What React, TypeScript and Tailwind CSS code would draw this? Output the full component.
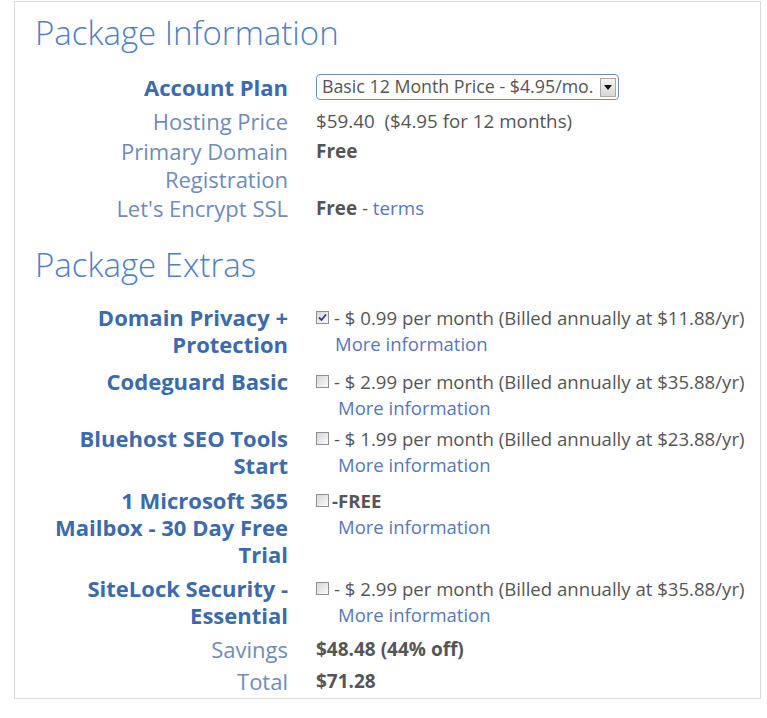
import React from 'react';

const FONT = { fontFamily: '"Open Sans", "Noto Sans", "Liberation Sans", sans-serif' };

type Extra = {
  label: string[];
  price?: string;
  free?: boolean;
  checked?: boolean;
  mt: string;
  moreIndent: string;
};

const EXTRAS: Extra[] = [
  {
    label: ['Domain Privacy +', 'Protection'],
    price: '- $ 0.99 per month (Billed annually at $11.88/yr)',
    checked: true,
    mt: 'mt-[19px]',
    moreIndent: 'pl-[19px]',
  },
  {
    label: ['Codeguard Basic'],
    price: '- $ 2.99 per month (Billed annually at $35.88/yr)',
    mt: 'mt-[10px]',
    moreIndent: 'pl-[22px]',
  },
  {
    label: ['Bluehost SEO Tools', 'Start'],
    price: '- $ 1.99 per month (Billed annually at $23.88/yr)',
    mt: 'mt-[4px]',
    moreIndent: 'pl-[22px]',
  },
  {
    label: ['1 Microsoft 365', 'Mailbox - 30 Day Free', 'Trial'],
    free: true,
    mt: 'mt-[8px]',
    moreIndent: 'pl-[22px]',
  },
  {
    label: ['SiteLock Security -', 'Essential'],
    price: '- $ 2.99 per month (Billed annually at $35.88/yr)',
    mt: 'mt-[7px]',
    moreIndent: 'pl-[22px]',
  },
];

function Checkbox({ checked }: { checked?: boolean }) {
  return (
    <span className="inline-flex h-[13px] w-[13px] shrink-0 items-center justify-center border border-[#8e8f8f] bg-gradient-to-br from-[#d6d6d6] to-[#fbfbfb]">
      {checked && (
        <svg width="9" height="9" viewBox="0 0 9 9">
          <path d="M1 4.5 L3.5 7 L8 1.5" fill="none" stroke="#2c3f8c" strokeWidth="1.8" />
        </svg>
      )}
    </span>
  );
}

function PlanSelect() {
  return (
    <div className="flex h-[26px] w-[303px] items-center justify-between rounded-[4px] border border-[#6d8db3] bg-white pl-[5px] pr-[2px]">
      <span className="text-[17.8px] leading-none text-[#555]">Basic 12 Month Price - $4.95/mo.</span>
      <span className="flex h-[19px] w-[16px] items-center justify-center border border-[#a9a9a9] bg-gradient-to-b from-[#f4f4f4] to-[#d8d8d8]">
        <svg width="8" height="5" viewBox="0 0 8 5">
          <path d="M0 0 H8 L4 5 Z" fill="#111" />
        </svg>
      </span>
    </div>
  );
}

function InfoRow({ label, bold, children, className = '' }: { label: string[]; bold?: boolean; children: React.ReactNode; className?: string }) {
  return (
    <div className={`flex ${className}`}>
      <div
        className={`w-[273px] shrink-0 text-right text-[22px] ${
          bold ? 'font-bold text-[#3b6aad]' : 'text-[#6e8cb6]'
        }`}
      >
        {label.map((l) => (
          <div key={l}>{l}</div>
        ))}
      </div>
      <div className="pl-[28px]">{children}</div>
    </div>
  );
}

export default function App() {
  return (
    <div className="min-h-[718px] bg-white pl-[14px] pt-[1px]" style={FONT}>
      <div className="h-[698px] w-[747px] border border-[#dcdcdc] pt-[11px]">
        <h2 className="pl-[20px] text-[33px] font-light leading-[40px] text-[#4d80c4]">Package Information</h2>

        <div className="leading-[28.5px]">
          <InfoRow label={['Account Plan']} bold className="mt-[18px] items-center leading-[32px]">
            <PlanSelect />
          </InfoRow>
          <InfoRow label={['Hosting Price']} className="mt-[4px]">
            <span className="text-[18.8px] text-[#555]">$59.40&nbsp; ($4.95 for 12 months)</span>
          </InfoRow>
          <InfoRow label={['Primary Domain', 'Registration']}>
            <span className="text-[19px] font-bold text-[#555]">Free</span>
          </InfoRow>
          <InfoRow label={["Let's Encrypt SSL"]}>
            <span className="text-[18.8px] text-[#555]">
              <span className="font-bold">Free</span> - <span className="text-[#5877b8]">terms</span>
            </span>
          </InfoRow>
        </div>

        <h2 className="mt-[22px] pl-[20px] text-[33px] font-light leading-[40px] text-[#4d80c4]">Package Extras</h2>

        {EXTRAS.map((x) => (
          <div key={x.label[0]} className={`flex ${x.mt}`}>
            <div className="w-[273px] shrink-0 text-right text-[22px] font-bold leading-[27px] text-[#3b6aad]">
              {x.label.map((l) => (
                <div key={l}>{l}</div>
              ))}
            </div>
            <div className="pl-[28px] text-[18.6px] leading-[26px]">
              <div className="flex h-[27px] items-center gap-[5px] text-[#555]">
                <Checkbox checked={x.checked} />
                {x.free ? <span className="-ml-[2px] font-bold">-FREE</span> : <span>{x.price}</span>}
              </div>
              <div className={`${x.moreIndent} text-[18.5px] text-[#5877b8]`}>More information</div>
            </div>
          </div>
        ))}

        <InfoRow label={['Savings']} className="mt-[5px] leading-[31px]">
          <span className="text-[19px] font-bold text-[#555]">$48.48 (44% off)</span>
        </InfoRow>
        <InfoRow label={['Total']} className="leading-[31px]">
          <span className="text-[19px] font-bold text-[#555]">$71.28</span>
        </InfoRow>
      </div>
    </div>
  );
}
